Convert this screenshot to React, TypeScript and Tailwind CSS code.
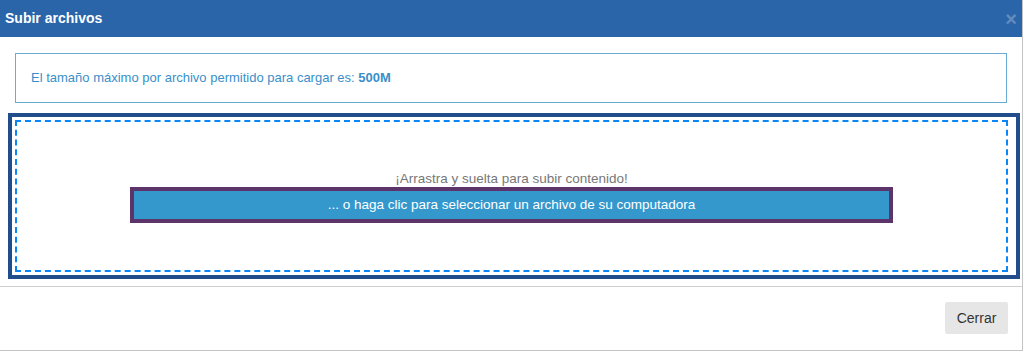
export default function App() {
  return (
    <div className="h-[352px] w-[1024px] bg-white font-['Liberation_Sans',Arial,sans-serif]">
      <div className="flex h-[351px] w-[1023px] flex-col border-b border-r border-[#c4c4c4] bg-white">
        {/* header */}
        <div className="flex h-[37px] shrink-0 items-center justify-between bg-[#2a65a9] pl-[5px] pr-[5px]">
          <h4 className="text-[14px] font-bold text-white">Subir archivos</h4>
          <span className="text-[20px] font-bold leading-none text-white opacity-25">×</span>
        </div>

        {/* body */}
        <div className="h-[250px] shrink-0 border-b border-[#cfcfcf]">
          <div className="mx-[15px] mt-[16px] flex h-[50px] w-[992px] items-center border border-[#68abd3] px-[15px] text-[13px] text-[#3a8fc9]">
            <span>
              El tamaño máximo por archivo permitido para cargar es: <b>500M</b>
            </span>
          </div>

          <div className="ml-[8px] mt-[10px] h-[166px] w-[1012px] border-4 border-[#224d8b] p-[3px]">
            <div className="flex h-full w-[993px] flex-col items-center justify-center border-2 border-dashed border-[#0a86f7] pt-[2px]">
              <p className="text-[13.5px] leading-[16px] text-[#777]">¡Arrastra y suelta para subir contenido!</p>
              <button className="flex h-[36px] w-[763px] items-center justify-center border-4 border-[#5c346a] bg-[#3498cd] text-[13.5px] text-white">
                ... o haga clic para seleccionar un archivo de su computadora
              </button>
            </div>
          </div>
        </div>

        {/* footer */}
        <div className="flex flex-1 items-start justify-end pr-[14px] pt-[15px]">
          <button className="h-[32px] w-[63px] rounded-[2px] bg-[#e6e6e6] text-[14px] text-[#333]">Cerrar</button>
        </div>
      </div>
    </div>
  )
}
